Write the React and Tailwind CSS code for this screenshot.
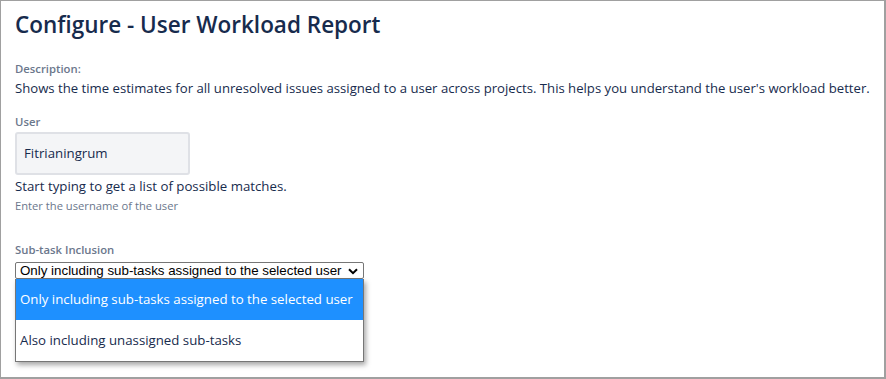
import React from "react";

export default function App() {
  const font = { fontFamily: '"Open Sans", "Noto Sans", sans-serif' };
  return (
    <div className="w-[886px] h-[379px] bg-white border border-[#a0a0a0] border-r-2 border-b-2 overflow-hidden" style={font}>
      <div className="pl-[14px] pt-[8px] relative">
        <h1 className="text-[22.5px] leading-[32px] font-semibold text-[#172b4d]">Configure - User Workload Report</h1>
        <div className="mt-[20px] text-[11.3px] leading-[16px] font-semibold text-[#6b778c]">Description:</div>
        <div className="mt-[1px] text-[13.15px] leading-[20px] text-[#172b4d] whitespace-nowrap">
          Shows the time estimates for all unresolved issues assigned to a user across projects. This helps you understand the user's workload better.
        </div>
        <div className="mt-[16px] text-[11.3px] leading-[16px] font-semibold text-[#6b778c]">User</div>
        <div className="mt-[2px] w-[175px] h-[43px] bg-[#f4f5f7] border-2 border-[#dfe1e6] rounded-[3px] flex items-center pl-[7px] text-[13.25px] text-[#172b4d]">
          Fitrianingrum
        </div>
        <div className="mt-[1px] text-[13.25px] leading-[20px] text-[#172b4d]">Start typing to get a list of possible matches.</div>
        <div className="mt-[2px] text-[11.2px] leading-[16px] text-[#6b778c]">Enter the username of the user</div>
        <div className="mt-[28px] text-[11.3px] leading-[16px] font-semibold text-[#6b778c]">Sub-task Inclusion</div>
        <div className="relative mt-[4px] w-[349px]">
          <div
            className="h-[17px] border border-[#767676] rounded-[2px] bg-white flex items-center justify-between pl-[4px] pr-[5px] text-[13.33px] text-black"
            style={{ fontFamily: '"Liberation Sans", Arial, sans-serif' }}
          >
            <span className="leading-[15px]">Only including sub-tasks assigned to the selected user</span>
            <svg width="10" height="7" viewBox="0 0 10 7" className="mt-[1px]">
              <path d="M1 1.2 L5 5.2 L9 1.2" fill="none" stroke="black" strokeWidth="2" />
            </svg>
          </div>
          <div className="absolute left-0 top-[17px] w-[349px] bg-white border border-[#767676] border-t-0 shadow-[2px_3px_5px_rgba(0,0,0,0.35)]">
            <div className="h-[41px] bg-[#1e90ff] text-white text-[13.25px] flex items-center pl-[4px] whitespace-nowrap">
              Only including sub-tasks assigned to the selected user
            </div>
            <div className="h-[41px] text-[#172b4d] text-[13.25px] flex items-center pl-[4px]">
              Also including unassigned sub-tasks
            </div>
          </div>
        </div>
      </div>
    </div>
  );
}
